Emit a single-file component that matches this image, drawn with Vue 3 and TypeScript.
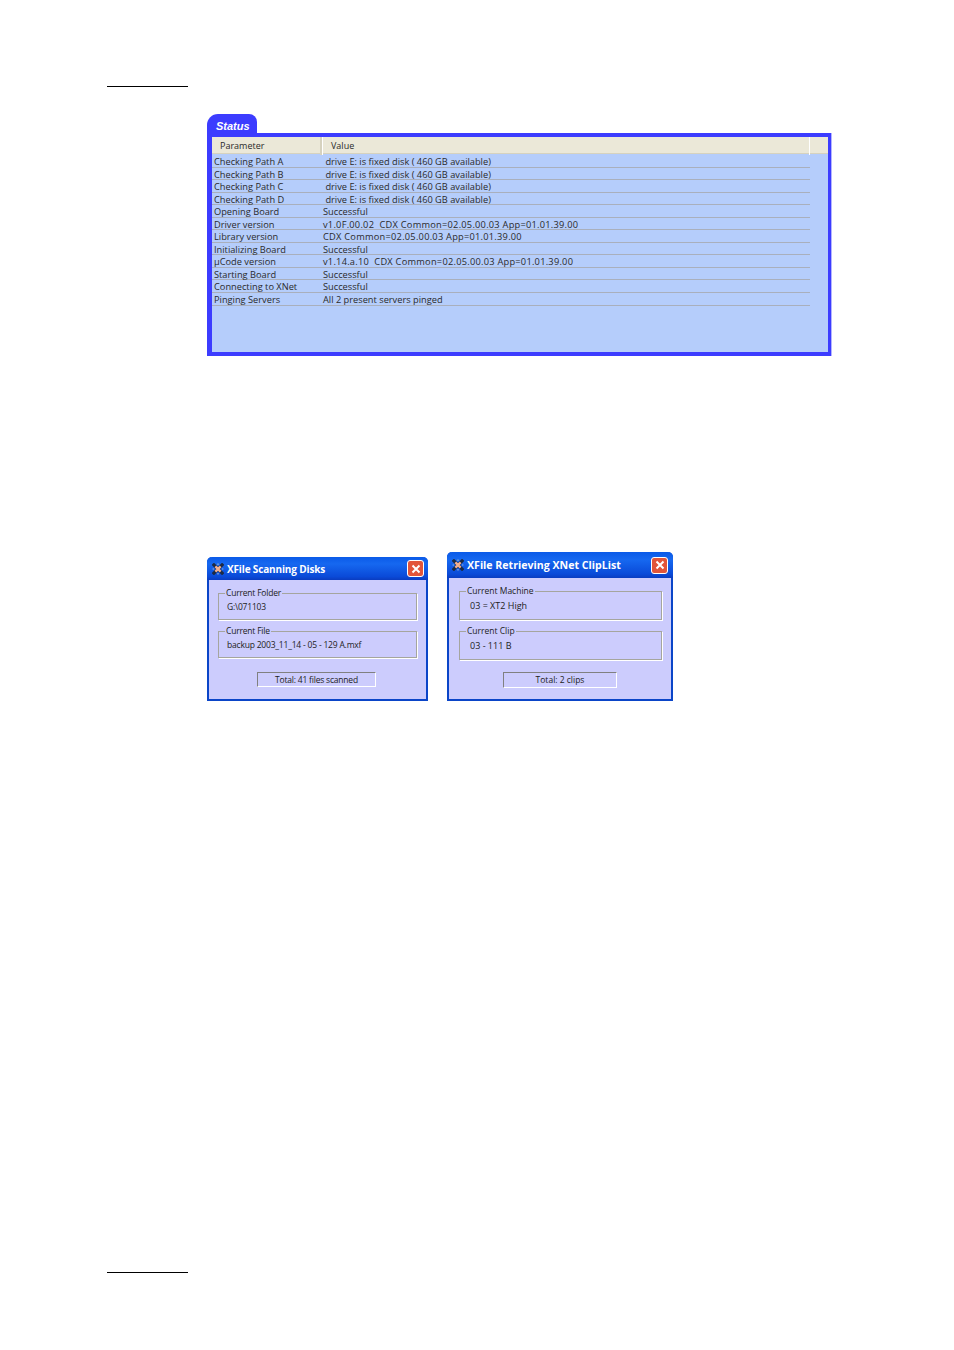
<script setup lang="ts">
const rows: [string, string][] = [
  ['Checking Path A', ' drive E: is fixed disk ( 460 GB available)'],
  ['Checking Path B', ' drive E: is fixed disk ( 460 GB available)'],
  ['Checking Path C', ' drive E: is fixed disk ( 460 GB available)'],
  ['Checking Path D', ' drive E: is fixed disk ( 460 GB available)'],
  ['Opening Board', 'Successful'],
  ['Driver version', 'v1.0F.00.02  CDX Common=02.05.00.03 App=01.01.39.00'],
  ['Library version', 'CDX Common=02.05.00.03 App=01.01.39.00'],
  ['Initializing Board', 'Successful'],
  ['µCode version', 'v1.14.a.10  CDX Common=02.05.00.03 App=01.01.39.00'],
  ['Starting Board', 'Successful'],
  ['Connecting to XNet', 'Successful'],
  ['Pinging Servers', 'All 2 present servers pinged'],
]
</script>

<template>
  <div class="page">
    <div class="rule"></div>
    <section class="status">
      <div class="tab">Status</div>
      <div class="panel">
        <div class="head">
          <div class="hcell first">Parameter</div>
          <div class="hcell second">Value</div>
          <div class="hcell third"></div>
        </div>
        <div class="row" v-for="r in rows" :key="r[0]">
          <span>{{ r[0] }}</span>
          <span :class="{ num: r[1].includes('=') }">{{ r[1] }}</span>
        </div>
      </div>
    </section>

    <div class="dialogs">
      <div class="dialog d1">
        <div class="title">
          <svg class="appicon" viewBox="0 0 12 12" width="12" height="12">
            <path d="M0.8 0.8 L11.2 11.2 M11.2 0.8 L0.8 11.2" stroke="#1c2a44" stroke-width="3.2" />
            <path d="M0.6 6 H2 M10 6 H11.4 M6 0.6 V2 M6 10 V11.4" stroke="#9fb4c8" stroke-width="1.2" />
            <path d="M3.4 3.4 L8.6 8.6 M8.6 3.4 L3.4 8.6" stroke="#f2b090" stroke-width="2.4" />
          </svg>
          <span class="ttext">XFile Scanning Disks</span>
          <span class="close"><svg viewBox="0 0 16 16" width="16" height="16"><path d="M4.5 4.5 L11.5 11.5 M11.5 4.5 L4.5 11.5" stroke="#fff" stroke-width="2" /></svg></span>
        </div>
        <div class="body">
          <fieldset class="grp"><legend>Current Folder</legend><div class="gv">G:\071103</div></fieldset>
          <fieldset class="grp second"><legend>Current File</legend><div class="gv">backup 2003_11_14 - 05 - 129 A.mxf</div></fieldset>
          <div class="total">Total: 41 files scanned</div>
        </div>
      </div>
      <div class="dialog d2">
        <div class="title">
          <svg class="appicon" viewBox="0 0 12 12" width="12" height="12">
            <path d="M0.8 0.8 L11.2 11.2 M11.2 0.8 L0.8 11.2" stroke="#1c2a44" stroke-width="3.2" />
            <path d="M0.6 6 H2 M10 6 H11.4 M6 0.6 V2 M6 10 V11.4" stroke="#9fb4c8" stroke-width="1.2" />
            <path d="M3.4 3.4 L8.6 8.6 M8.6 3.4 L3.4 8.6" stroke="#f2b090" stroke-width="2.4" />
          </svg>
          <span class="ttext">XFile Retrieving XNet ClipList</span>
          <span class="close"><svg viewBox="0 0 16 16" width="16" height="16"><path d="M4.5 4.5 L11.5 11.5 M11.5 4.5 L4.5 11.5" stroke="#fff" stroke-width="2" /></svg></span>
        </div>
        <div class="body">
          <fieldset class="grp"><legend>Current Machine</legend><div class="gv">03 = XT2 High</div></fieldset>
          <fieldset class="grp second"><legend>Current Clip</legend><div class="gv">03 - 111 B</div></fieldset>
          <div class="total">Total: 2 clips</div>
        </div>
      </div>
    </div>

    <div class="spacer"></div>
    <div class="rule"></div>
  </div>
</template>

<style scoped>
.page {
  width: 954px;
  height: 1350px;
  box-sizing: border-box;
  padding: 86px 0 77px 107px;
  display: flex;
  flex-direction: column;
  background: #fff;
  font-family: "Open Sans", "Noto Sans", sans-serif;
  color: #2a2a2a;
  overflow: hidden;
}
.rule { width: 81px; height: 1px; background: #000; flex: none; }
.spacer { flex: 1; }
.status { margin: 27px 0 0 100px; width: 624px; }
.tab {
  width: 50px;
  height: 20px;
  box-sizing: border-box;
  background: #3c3cff;
  border-radius: 11px 8px 0 0;
  color: #fff;
  font: italic bold 11px/24px "Liberation Sans", sans-serif;
  padding-left: 9px;
  margin-bottom: -1px;
}
.panel {
  height: 223px;
  box-sizing: border-box;
  background: #b5cdfb;
  border: 4px solid #3c3cff;
  border-left-width: 5px;
  border-right-width: 3px;
  box-shadow: 1px 0 0 #b5b5ff;
}
.head {
  display: grid;
  grid-template-columns: 111px 487px 1fr;
  height: 17px;
  margin-bottom: 1px;
  background: #ebe8d8;
  border-bottom: 1px solid #d6d2bf;
  box-sizing: border-box;
  font-size: 9px;
  line-height: 18px;
}
.hcell { padding-left: 8px; border-right: 1px solid #fff; }
.hcell.first { box-shadow: inset -2px 0 0 #d6d2bf; }
.hcell.third { border-right: 0; }
.row {
  display: grid;
  grid-template-columns: 109px 1fr;
  width: 598px;
  height: 12.55px;
  box-sizing: border-box;
  padding-left: 2px;
  border-bottom: 1px solid #a9afbc;
  font-size: 9.25px;
  line-height: 13px;
  white-space: pre;
}
.num { letter-spacing: 0.25px; }
.dialogs {
  display: flex;
  align-items: flex-end;
  gap: 19px;
  margin: 196px 0 0 100px;
}
.dialog {
  box-sizing: border-box;
  background: #ccccfd;
  border: 2px solid #0b45c8;
  border-top: 0;
  border-radius: 5px 5px 0 0;
  color: #222;
}
.d1 { width: 221px; height: 144px; font-size: 8.5px; letter-spacing: -0.2px; }
.d2 { width: 226px; height: 149px; font-size: 8.5px; }
.title {
  height: 23px;
  margin: 0 -2px;
  display: flex;
  align-items: center;
  padding: 0 4px 0 5px;
  background: linear-gradient(#0a5ae8, #1668f0 30%, #0a4ad8 85%, #0a3cc0);
  border-radius: 5px 5px 0 0;
  color: #fff;
  font: bold 10px "Open Sans", sans-serif;
  letter-spacing: -0.15px;
}
.d2 .title { height: 26px; padding-right: 5px; font-size: 10.6px; letter-spacing: 0; }
.appicon { flex: none; margin-right: 3px; }
.ttext { flex: 1; white-space: nowrap; }
.close {
  width: 17px;
  height: 17px;
  flex: none;
  background: #e2553a;
  border: 1px solid #fff;
  border-radius: 3px;
  box-sizing: border-box;
  display: flex;
  align-items: center;
  justify-content: center;
}
.close svg { flex: none; }
.body { padding: 9px 9px 0; display: flex; flex-direction: column; }
.d2 .body { padding: 9px 9px 0 10px; }
.grp {
  margin: 0;
  padding: 0 0 0 8px;
  height: 31px;
  box-sizing: border-box;
  border: 1px solid #a5a59e;
  box-shadow: 1px 1px 0 #fff;
  min-width: 0;
}
.d2 .grp { height: 33px; padding-left: 10px; }
.grp.second { margin-top: 7px; }
.grp legend { padding: 0 1px; margin-left: -2px; line-height: 8px; font-size: inherit; }
.d2 .grp legend { margin-left: -4px; }
.gv { line-height: 12px; padding-top: 4px; white-space: nowrap; }
.d2 .gv { padding-top: 5px; font-size: 9px; }
.total {
  width: 119px;
  height: 15px;
  box-sizing: border-box;
  margin: 14px 0 0 39px;
  border: 1px solid #808080;
  border-right-color: #fff;
  border-bottom-color: #fff;
  text-align: center;
  line-height: 13px;
}
.d2 .total { width: 114px; height: 16px; margin: 12px 0 0 44px; line-height: 14px; }
</style>
